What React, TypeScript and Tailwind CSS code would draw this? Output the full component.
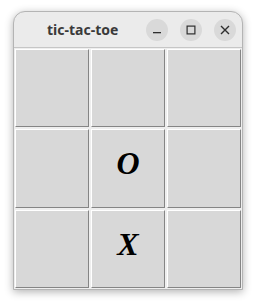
import React from "react";

const Cell = ({ v }: { v?: string }) => (
  <div className="flex items-center justify-center pb-[10px] bg-[#d8d8d8] border-t border-l border-t-white border-l-white border-r border-b border-r-[#858585] border-b-[#858585]">
    {v ? (
      <span
        className="text-[32px] font-bold italic text-black leading-none"
        style={{ fontFamily: '"Liberation Serif", serif' }}
      >
        {v}
      </span>
    ) : null}
  </div>
);

export default function App() {
  const cells = ["", "", "", "", "O", "", "", "X", ""];
  return (
    <div className="w-[256px] h-[306px] bg-white pt-[11px] pl-[13px]">
      <div className="w-[230px] h-[279px] rounded-t-[12px] border border-[#b4b4b4] bg-[#ebebeb] shadow-[0_2px_8px_rgba(0,0,0,0.3)] flex flex-col overflow-hidden">
        <div className="h-[36px] border-b border-[#c6c6c6] flex items-center shrink-0">
          <div
            className="ml-[33px] text-[14px] font-bold text-[#3a3a3a]"
            style={{ fontFamily: '"Noto Sans", sans-serif' }}
          >
            tic-tac-toe
          </div>
          <div className="ml-auto mr-[6px] flex items-center gap-[12px]">
            <div className="w-[22px] h-[22px] rounded-full bg-[#d9d9d9] flex items-center justify-center">
              <svg width="10" height="10" viewBox="0 0 10 10">
                <rect x="1" y="7" width="8" height="1.3" fill="#2e2e2e" />
              </svg>
            </div>
            <div className="w-[22px] h-[22px] rounded-full bg-[#d9d9d9] flex items-center justify-center">
              <svg width="10" height="10" viewBox="0 0 10 10">
                <rect x="1.1" y="1.1" width="7.8" height="7.8" fill="none" stroke="#2e2e2e" strokeWidth="1.2" />
              </svg>
            </div>
            <div className="w-[22px] h-[22px] rounded-full bg-[#d9d9d9] flex items-center justify-center">
              <svg width="10" height="10" viewBox="0 0 10 10">
                <path d="M1 1 L9 9 M9 1 L1 9" stroke="#2e2e2e" strokeWidth="1.4" />
              </svg>
            </div>
          </div>
        </div>
        <div className="flex-1 bg-[#eeeeee] p-[1px] grid grid-cols-3 grid-rows-3 gap-[2px]">
          {cells.map((c, i) => (
            <Cell key={i} v={c} />
          ))}
        </div>
      </div>
    </div>
  );
}
